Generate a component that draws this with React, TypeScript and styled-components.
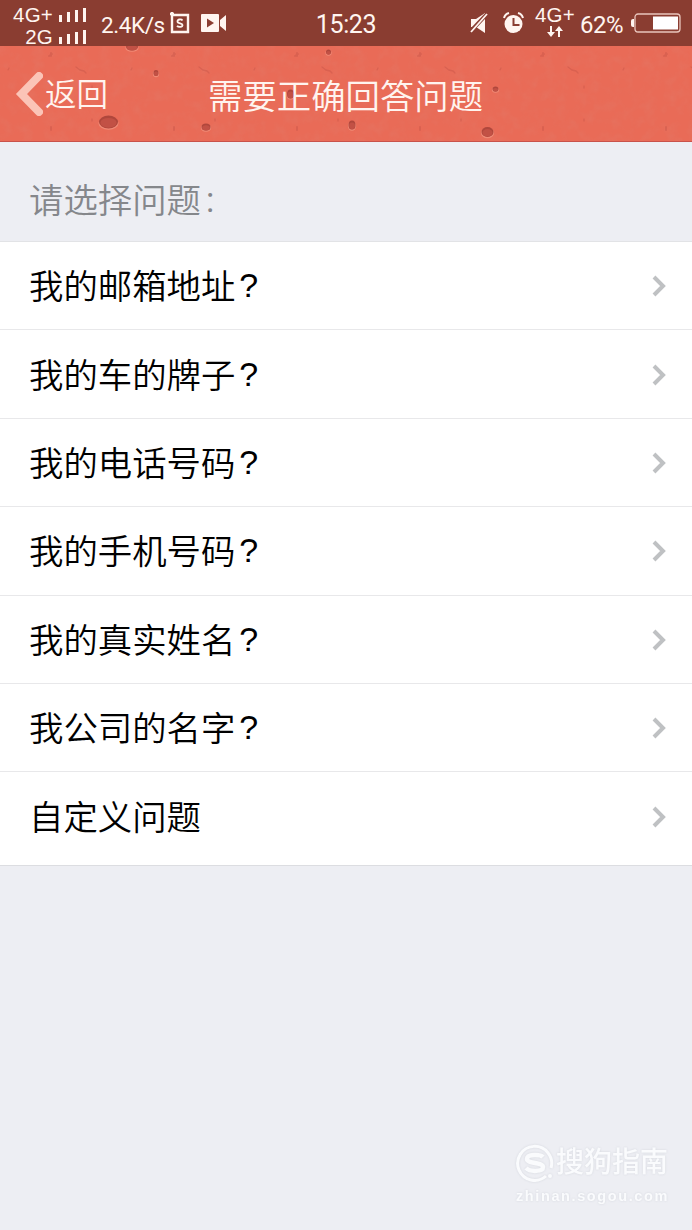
import React from 'react';
import styled, { createGlobalStyle } from 'styled-components';

const GlobalStyle = createGlobalStyle`
  html, body { margin: 0; padding: 0; background: #edeef3; }
  body { font-family: Roboto, "Noto Sans CJK SC", sans-serif; }
  *, *::before, *::after { box-sizing: border-box; }
`;

const Screen = styled.div`
  width: 692px;
  height: 1230px;
  display: flex;
  flex-direction: column;
  background: #edeef3;
  overflow: hidden;
`;

const StatusBar = styled.header`
  height: 46px;
  flex: none;
  display: grid;
  grid-template-columns: 1fr auto 1fr;
  align-items: center;
  padding: 0 11px;
  background: #8a3d31;
  color: #fff5f0;
  white-space: nowrap;
`;

const StatusGroup = styled.div<{ $end?: boolean }>`
  height: 46px;
  display: flex;
  align-items: center;
  justify-content: ${(p) => (p.$end ? 'flex-end' : 'flex-start')};
`;

const SignalStack = styled.div`
  width: 76px;
  height: 46px;
  padding-top: 4px;
  display: flex;
  flex-direction: column;
`;

const SignalLine = styled.div`
  height: 22px;
  flex: none;
  display: flex;
  align-items: center;
  justify-content: flex-end;
  gap: 6px;
`;

const NetLabel = styled.span`
  font-family: "Liberation Sans", sans-serif;
  font-size: 20.5px;
  line-height: 22px;
  letter-spacing: 0.2px;
`;

const StatusText = styled.span<{ $size: number; $left?: number; $spacing?: number }>`
  font-size: ${(p) => p.$size}px;
  line-height: 30px;
  margin-left: ${(p) => p.$left ?? 0}px;
  padding-top: 3px;
  letter-spacing: ${(p) => p.$spacing ?? 0}px;
`;

const Glyph = styled.svg<{ $left?: number }>`
  display: block;
  flex: none;
  margin-left: ${(p) => p.$left ?? 0}px;
`;

const DataStack = styled.div`
  width: 42px;
  height: 38px;
  margin-left: 10px;
  display: flex;
  flex-direction: column;
  align-items: center;
`;

const NavBar = styled.nav`
  position: relative;
  height: 96px;
  flex: none;
  display: grid;
  grid-template-columns: 208px auto 1fr;
  align-items: center;
  background: #e96b57;
  border-bottom: 1px solid #c9524a;
  color: #fff4ef;
`;

const Texture = styled.svg`
  position: absolute;
  inset: 0;
`;

const BackButton = styled.button`
  position: relative;
  display: flex;
  align-items: center;
  padding: 0 0 0 14px;
  border: 0;
  background: none;
  color: inherit;
  font-family: inherit;
`;

const BackLabel = styled.span`
  font-size: 31.5px;
  font-weight: 350;
  line-height: 40px;
  padding-top: 4px;
  margin-left: 2px;
`;

const Title = styled.h1`
  position: relative;
  margin: 6px 0 0;
  font-size: 34.4px;
  font-weight: 350;
  line-height: 48px;
  white-space: nowrap;
`;

const Prompt = styled.div`
  height: 100px;
  flex: none;
  display: flex;
  align-items: center;
  padding: 12px 30px 0 29px;
  font-size: 34.4px;
  font-weight: 350;
  color: #85878b;
  border-bottom: 1px solid #e2e3e6;
`;

const Colon = styled.span`
  font-weight: 400;
  padding-top: 4px;
  margin-left: 5px;
`;

const List = styled.ul`
  flex: none;
  height: 624px;
  margin: 0;
  padding: 0;
  list-style: none;
  background: #fff;
  border-bottom: 1px solid #dcdde1;
`;

const Row = styled.li`
  height: 88.4px;
  display: flex;
  align-items: center;
  justify-content: space-between;
  padding: 1px 25px 0 29px;
  font-size: 34.4px;
  font-weight: 350;
  color: #000;
  border-bottom: 1px solid #e8e8ea;

  &:last-child { border-bottom: 0; }
`;

const RowLabel = styled.span`
  display: flex;
  align-items: center;
  padding-bottom: 4px;
`;

const Question = styled.span`
  font-family: "Liberation Sans", sans-serif;
  font-size: 34px;
  font-weight: 400;
  line-height: 1;
  padding-top: 2px;
  margin-left: 4px;
`;

const Watermark = styled.footer`
  margin: auto 23px 24px auto;
  width: 153px;
  color: #fafbfd;
  filter: drop-shadow(0 0 1px rgba(170, 174, 184, 0.35));
`;

const Brand = styled.div`
  display: flex;
  align-items: center;
  gap: 2px;
  font-size: 28px;
  font-weight: 500;
  line-height: 40px;
  white-space: nowrap;
`;

const Domain = styled.div`
  font-family: "Liberation Sans", sans-serif;
  font-size: 14.5px;
  font-weight: 700;
  line-height: 20px;
  letter-spacing: 1.6px;
  margin-top: 3px;
  white-space: nowrap;
`;

const Bars = () => (
  <Glyph width="28" height="16" viewBox="0 0 28 16" fill="#fff5f0">
    <rect x="0" y="8" width="3" height="7" />
    <rect x="8" y="5" width="3" height="10" />
    <rect x="16" y="3" width="3" height="12" />
    <rect x="24" y="1" width="3" height="14" />
  </Glyph>
);

const holes = [
  { x: 132, y: 1, rx: 6, ry: 3.5 },
  { x: 156, y: 27, rx: 2.5, ry: 3 },
  { x: 108.5, y: 76, rx: 9.5, ry: 6.5 },
  { x: 206, y: 81, rx: 4.5, ry: 3.5 },
  { x: 328.5, y: 6, rx: 2.5, ry: 2.5 },
  { x: 290.5, y: 48, rx: 3.5, ry: 4.5 },
  { x: 352, y: 79, rx: 3.5, ry: 4.5 },
  { x: 495.5, y: 43, rx: 3, ry: 2.5 },
  { x: 487.5, y: 86, rx: 6, ry: 5 },
];

const NavTexture = () => (
  <Texture width="692" height="95" viewBox="0 0 692 95">
    <defs>
      <filter id="grain" x="0" y="0" width="100%" height="100%">
        <feTurbulence type="fractalNoise" baseFrequency="0.09" numOctaves="3" seed="4" />
        <feColorMatrix values="0 0 0 0 0.72  0 0 0 0 0.25  0 0 0 0 0.2  0.9 0 0 0 -0.38" />
      </filter>
      <pattern id="specks" width="123" height="95" patternUnits="userSpaceOnUse">
        <g fill="none" stroke="#b94a3f" strokeLinecap="round" opacity="0.32">
          <path d="M49 10l3-2M51 7v3" strokeWidth="2" />
          <path d="M51 81v3" strokeWidth="2" />
          <path d="M76 21l4 3 4 1 2 2" strokeWidth="1.4" />
          <path d="M92 40v2M92 73v2" strokeWidth="1.4" />
          <path d="M8 24l1-2" strokeWidth="1.3" />
        </g>
      </pattern>
    </defs>
    <rect width="692" height="95" filter="url(#grain)" opacity="0.45" />
    <rect width="692" height="95" fill="url(#specks)" />
    {holes.map((h) => (
      <g key={`${h.x}-${h.y}`}>
        <ellipse cx={h.x} cy={h.y + 1} rx={h.rx + 0.6} ry={h.ry + 0.3} fill="#f08a76" />
        <ellipse cx={h.x} cy={h.y} rx={h.rx} ry={h.ry} fill="#b0473c" />
        <ellipse cx={h.x} cy={h.y + 0.8} rx={h.rx * 0.85} ry={h.ry * 0.75} fill="#c25145" />
      </g>
    ))}
  </Texture>
);

const questions = [
  '我的邮箱地址',
  '我的车的牌子',
  '我的电话号码',
  '我的手机号码',
  '我的真实姓名',
  '我公司的名字',
];

const Chevron = () => (
  <Glyph width="16" height="24" viewBox="0 0 16 24" fill="none">
    <path d="M3 3l9 9-9 9" stroke="#bfc1c3" strokeWidth="4" />
  </Glyph>
);

export default function App() {
  return (
    <Screen>
      <GlobalStyle />
      <StatusBar>
        <StatusGroup>
          <SignalStack>
            <SignalLine><NetLabel>4G+</NetLabel><Bars /></SignalLine>
            <SignalLine><NetLabel>2G</NetLabel><Bars /></SignalLine>
          </SignalStack>
          <StatusText $size={22.5} $left={14} $spacing={-0.4}>2.4K/s</StatusText>
          <Glyph $left={5} width="20" height="22" viewBox="0 0 20 22" fill="none" stroke="#fff5f0">
            <path d="M2 3h16v17H2zM2 4V0M0 2h4" strokeWidth="2.4" />
            <path d="M12.500 8.500c-1-1.500-5-1.500-5 1s5 1.200 5 3.500-4 2.500-5.500 .8" strokeWidth="1.800" />
          </Glyph>
          <Glyph $left={11} width="26" height="18" viewBox="0 0 26 18">
            <path d="M1 0h16a1 1 0 0 1 1 1v16a1 1 0 0 1-1 1H1a1 1 0 0 1-1-1V1a1 1 0 0 1 1-1zM19 6l6-5v16l-6-5z" fill="#fff5f0" />
            <path d="M6 4.500v9l7-4.500z" fill="#8a3d31" />
          </Glyph>
        </StatusGroup>
        <StatusText $size={25} $spacing={-0.4}>15:23</StatusText>
        <StatusGroup $end>
          <Glyph width="18" height="20" viewBox="0 0 18 20">
            <path d="M1 6h5l9-6v20l-9-6H1z" fill="#fff5f0" />
            <path d="M0 19L17 1" stroke="#8a3d31" strokeWidth="4" />
            <path d="M1 19L17 1" stroke="#fff5f0" strokeWidth="1.800" />
          </Glyph>
          <Glyph $left={15} width="21" height="22" viewBox="0 0 21 22" fill="none">
            <circle cx="10.500" cy="12" r="9" fill="#fff5f0" />
            <path d="M1 6q1-4 5-5M20 6q-1-4-5-5" stroke="#fff5f0" strokeWidth="2" />
            <path d="M10.500 6v7h6" stroke="#8a3d31" strokeWidth="2" />
          </Glyph>
          <DataStack>
            <NetLabel>4G+</NetLabel>
            <Glyph width="18" height="12" viewBox="0 0 18 12">
              <path d="M4 0h2v6h3l-4 5-4-5h3zM12 11h2V5h3l-4-5-4 5h3z" fill="#fff5f0" />
            </Glyph>
          </DataStack>
          <StatusText $size={24} $left={4} $spacing={-0.5}>62%</StatusText>
          <Glyph $left={7} width="51" height="20" viewBox="0 0 51 20">
            <path d="M4 6H3Q1 6 1 8v4q0 2 2 2h1z" fill="#fff5f0" />
            <rect x="5" y="1" width="45" height="18" rx="3" fill="none" stroke="#e9c5bc" strokeWidth="1.300" />
            <rect x="23" y="3.500" width="25" height="13" fill="#fff" />
          </Glyph>
        </StatusGroup>
      </StatusBar>

      <NavBar>
        <NavTexture />
        <BackButton>
          <Glyph width="29" height="44" viewBox="0 0 29 44">
            <path d="M25 4L7.500 22L25 40" fill="none" stroke="#fbc4b7" strokeWidth="8" strokeLinecap="round" strokeLinejoin="miter" />
          </Glyph>
          <BackLabel>返回</BackLabel>
        </BackButton>
        <Title>需要正确回答问题</Title>
      </NavBar>

      <Prompt>请选择问题<Colon>:</Colon></Prompt>

      <List>
        {questions.map((q) => (
          <Row key={q}>
            <RowLabel>{q}<Question>?</Question></RowLabel>
            <Chevron />
          </Row>
        ))}
        <Row>
          <RowLabel>自定义问题</RowLabel>
          <Chevron />
        </Row>
      </List>

      <Watermark>
        <Brand>
          <Glyph width="38" height="38" viewBox="0 0 38 38" fill="none" stroke="#fafbfd">
            <path d="M30 32A17 17 0 1 1 35 24" strokeWidth="3" />
            <path d="M27 13c-3-3-16-3-16 2s16 3 16 8-13 5-17 1" strokeWidth="4.500" />
            <circle cx="34" cy="32" r="1" strokeWidth="2" />
          </Glyph>
          搜狗指南
        </Brand>
        <Domain>zhinan.sogou.com</Domain>
      </Watermark>
    </Screen>
  );
}
